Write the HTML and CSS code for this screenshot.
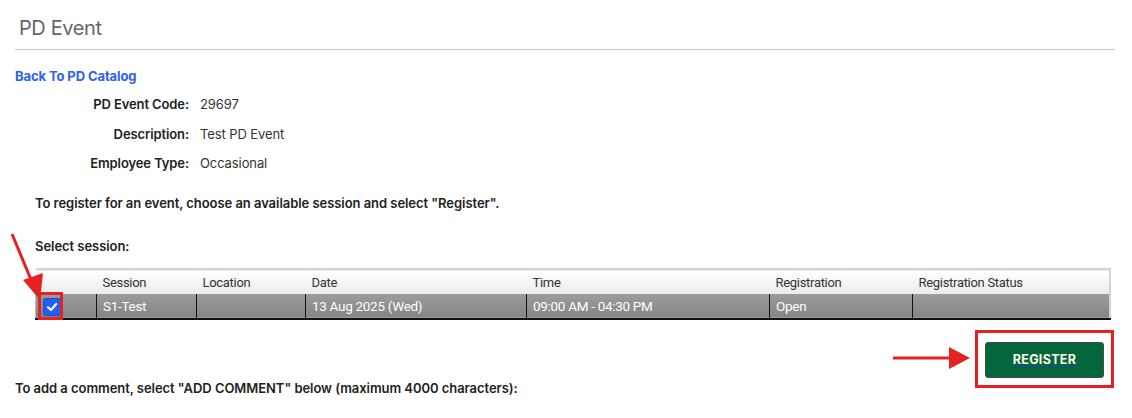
FILE: index.html
```html
<!DOCTYPE html>
<html>
<head>
<meta charset="utf-8">
<link rel="stylesheet" href="styles.css">
</head>
<body>
<div class="page">
  <h1 class="title">PD Event</h1>
  <a class="back" href="#">Back To PD Catalog</a>
  <div class="info">
    <div class="lbl">PD Event Code:</div><div class="val">29697</div>
    <div class="lbl">Description:</div><div class="val">Test PD Event</div>
    <div class="lbl">Employee Type:</div><div class="val">Occasional</div>
  </div>
  <p class="instr">To register for an event, choose an available session and select "Register".</p>
  <p class="select">Select session:</p>
  <div class="table-wrap">
    <table class="sessions">
      <colgroup>
        <col style="width:61px"><col style="width:100px"><col style="width:109px"><col style="width:221px"><col style="width:243px"><col style="width:143px"><col>
      </colgroup>
      <thead>
        <tr><th></th><th>Session</th><th>Location</th><th>Date</th><th>Time</th><th>Registration</th><th>Registration Status</th></tr>
      </thead>
      <tbody>
        <tr>
          <td class="cb-cell"><span class="cb"><svg width="16" height="16" viewBox="0 0 16 16"><path d="M4 8.3 L7 11 L12.2 5" fill="none" stroke="#fff" stroke-width="2.2" stroke-linecap="round" stroke-linejoin="round"/></svg></span></td>
          <td>S1-Test</td><td></td><td>13 Aug 2025 (Wed)</td><td>09:00 AM - 04:30 PM</td><td>Open</td><td></td>
        </tr>
      </tbody>
    </table>
    <div class="cb-mark"></div>
    <svg class="arrow-diag" width="40" height="75" viewBox="0 0 40 75">
      <line x1="4" y1="4" x2="24" y2="52" stroke="#e52222" stroke-width="3"/>
      <polygon points="15,50 35,43 32,70" fill="#e52222"/>
    </svg>
  </div>
  <div class="action">
    <div class="btn-holder">
      <svg class="arrow-right" width="80" height="22" viewBox="0 0 80 22">
        <line x1="0" y1="11" x2="58" y2="11" stroke="#e52222" stroke-width="3"/>
        <polygon points="56,0 77,11 56,22" fill="#e52222"/>
      </svg>
      <div class="btn-frame"></div>
      <button class="register">REGISTER</button>
    </div>
  </div>
  <p class="comment">To add a comment, select "ADD COMMENT" below (maximum 4000 characters):</p>
</div>
</body>
</html>
```
FILE: styles.css
```css
* { box-sizing: border-box; }
body { margin: 0; background: #fff; font-family: Inter, "Noto Sans", sans-serif; color: #222; }
.page { padding: 0 17px 0 15px; }
.title {
  margin: 0; padding: 16px 0 9px 4px;
  font-size: 20px; line-height: 24px; font-weight: 400; color: #666;
  border-bottom: 1px solid #c8c8c8;
  letter-spacing: -0.4px;
}
.back {
  display: block; margin-top: 17px;
  font-size: 13px; line-height: 18px; font-weight: 700; color: #2b62f0; text-decoration: none;
  letter-spacing: -0.1px;
}
.info {
  display: grid; grid-template-columns: 174px auto; column-gap: 11px;
  margin-top: 5px; font-size: 13px; letter-spacing: -0.1px;
}
.info > div { line-height: 29.5px; }
.lbl { text-align: right; font-weight: 600; color: #222; }
.val { color: #333; }
.instr { margin: 15px 0 0 20px; font-size: 13px; line-height: 18px; font-weight: 600; letter-spacing: -0.05px; }
.select { margin: 25px 0 0 20px; font-size: 13px; line-height: 18px; font-weight: 600; letter-spacing: -0.05px; }
.table-wrap { position: relative; margin: 13px 4px 0 20px; }
.sessions {
  width: 100%; border-collapse: collapse; table-layout: fixed;
  font-family: Roboto, "Liberation Sans", sans-serif; font-size: 13px; letter-spacing: -0.3px;
}
.sessions thead tr {
  background: linear-gradient(#ffffff, #ebebeb);
  border-top: 2px solid #d4d4d4; border-right: 2px solid #d4d4d4;
}
.sessions th { height: 25px; font-weight: 400; text-align: left; color: #333; padding: 2px 6px 0; }
.sessions tbody tr {
  background: linear-gradient(#9c9c9c, #858585);
  border-bottom: 2px solid #111; border-left: 1px solid #bbb; border-right: 2px solid #d4d4d4;
}
.sessions td { height: 25px; color: #fff; padding: 1px 6px 0; border-left: 1px solid #111; font-size: 13.5px; }
.sessions td.cb-cell { border-left: none; padding-left: 8px; }
.cb {
  display: inline-block; width: 16px; height: 16px; border-radius: 2px; background: #2260f5;
  vertical-align: middle; box-shadow: 0 0 0 1px #1b4fd0;
}
.cb svg { display: block; }
.cb-mark {
  position: absolute; left: 3px; top: 24px; width: 25px; height: 28px;
  border: 3px solid #e52222;
}
.arrow-diag { position: absolute; left: -27px; top: -38px; }
.action { display: flex; justify-content: flex-end; margin-top: 22px; padding-right: 11px; }
.btn-holder { position: relative; }
.arrow-right { position: absolute; left: -92px; top: 5px; }
.btn-frame {
  position: absolute; left: -10px; right: -10px; top: -12px; bottom: -10px;
  border: 3px solid #e52222;
}
.register {
  display: block; width: 119px; height: 36px; border: 1px solid #4a4a4a; border-radius: 3px;
  background: #02673a; color: #fffbe8; font-family: Inter, sans-serif; font-size: 12.5px; font-weight: 700;
  letter-spacing: 0.3px; text-decoration: underline; text-decoration-color: #1a3fb0; text-underline-offset: 3px;
}
.comment { margin: 1px 0 0; font-size: 13px; line-height: 18px; font-weight: 600; letter-spacing: -0.05px; }
```
